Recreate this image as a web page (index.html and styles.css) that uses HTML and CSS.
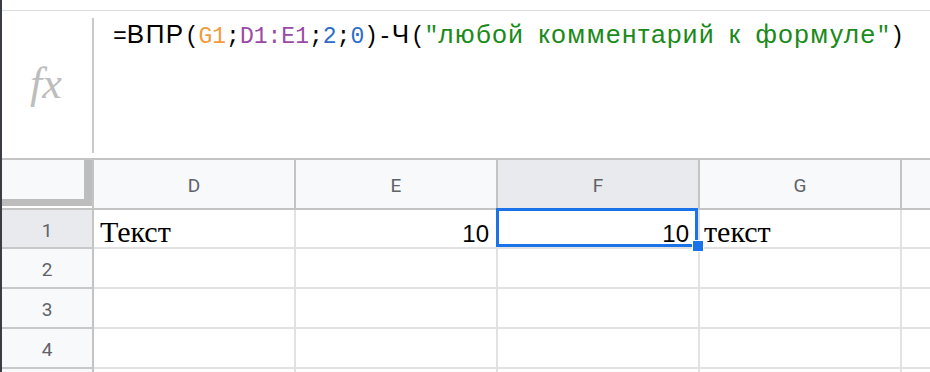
FILE: index.html
```html
<!DOCTYPE html>
<html lang="ru">
<head>
<meta charset="utf-8">
<title>Sheets</title>
<link rel="stylesheet" href="styles.css">
</head>
<body>
<div class="app">
  <div class="topbar"></div>
  <div class="fbar">
    <div class="fx">fx</div>
    <div class="fdiv"></div>
    <div class="ftext"><span class="m">=</span><span class="s">ВПР</span><span class="m">(<span class="c-or">G1</span>;<span class="c-pu">D1:E1</span>;<span class="c-bl">2</span>;<span class="c-bl">0</span>)-</span><span class="s">Ч</span><span class="m">(<span class="c-gr">"</span></span><span class="s c-gr">любой</span><span class="m"> </span><span class="s c-gr">комментарий</span><span class="m"> </span><span class="s c-gr">к</span><span class="m"> </span><span class="s c-gr">формуле</span><span class="m"><span class="c-gr">"</span>)</span></div>
  </div>
  <div class="grid">
    <div class="corner"><div class="corner-in"></div></div>
    <div class="ch">D</div>
    <div class="ch">E</div>
    <div class="ch sel">F</div>
    <div class="ch">G</div>
    <div class="ch last"></div>

    <div class="rh sel r1">1</div>
    <div class="cell r1 serif">Текст</div>
    <div class="cell r1 num">10</div>
    <div class="cell r1 num active">10<span class="handle"></span></div>
    <div class="cell r1 serif lt">текст</div>
    <div class="cell r1 last"></div>

    <div class="rh">2</div>
    <div class="cell"></div>
    <div class="cell"></div>
    <div class="cell"></div>
    <div class="cell"></div>
    <div class="cell last"></div>

    <div class="rh">3</div>
    <div class="cell"></div>
    <div class="cell"></div>
    <div class="cell"></div>
    <div class="cell"></div>
    <div class="cell last"></div>

    <div class="rh">4</div>
    <div class="cell"></div>
    <div class="cell"></div>
    <div class="cell"></div>
    <div class="cell"></div>
    <div class="cell last"></div>

    <div class="rh"></div>
    <div class="cell"></div>
    <div class="cell"></div>
    <div class="cell"></div>
    <div class="cell"></div>
    <div class="cell last"></div>
  </div>
</div>
</body>
</html>
```

FILE: styles.css
```css
* { box-sizing: border-box; }
html, body { margin: 0; padding: 0; background: #fff; }
body {
  width: 930px;
  height: 372px;
  overflow: hidden;
  font-family: Roboto, "Liberation Sans", sans-serif;
}
.app {
  border-left: 2px solid #3a3d41;
  height: 372px;
  overflow: hidden;
}
.topbar {
  height: 11px;
  border-bottom: 1px solid #dadce0;
}
.fbar {
  display: flex;
  height: 149px;
  border-bottom: 2px solid #c4c4c4;
}
.fx {
  width: 90px;
  display: flex;
  align-items: center;
  justify-content: center;
  font-family: "Liberation Serif", serif;
  font-style: italic;
  font-size: 44px;
  color: #bdbdbd;
  padding-bottom: 2px;
  padding-right: 2px;
}
.fdiv {
  width: 2px;
  background: #c9c9c9;
  margin: 7px 0 5px;
}
.ftext {
  padding: 8px 0 0 19px;
  font-family: "Liberation Mono", monospace;
  font-size: 23px;
  line-height: 30px;
  color: #000;
  white-space: pre;
}
.ftext .s {
  font-family: "Liberation Sans", Arial, sans-serif;
  font-size: 26px;
  letter-spacing: 1.5px;
}
.c-or { color: #f29b3a; }
.c-pu { color: #9a4aa6; }
.c-bl { color: #2b6dc8; }
.c-gr { color: #1b8a1b; }

.grid {
  display: grid;
  grid-template-columns: 92px 202px 202px 202px 202px 28px;
  grid-template-rows: 50px 39px 40px 40px 40px 40px;
}
.corner {
  background: #fff;
  border-right: 2px solid #c4c4c4;
  border-bottom: 2px solid #c4c4c4;
}
.corner-in {
  width: 90px;
  height: 46px;
  background: #f8f9fa;
  border-right: 8px solid #bdbdbd;
  border-bottom: 7px solid #bdbdbd;
}
.ch {
  background: #f8f9fa;
  border-right: 2px solid #c4c4c4;
  border-bottom: 2px solid #c4c4c4;
  display: flex;
  align-items: center;
  justify-content: center;
  font-size: 19px;
  color: #5f6368;
  padding-top: 2px;
}
.ch.sel { background: #e8eaed; }
.ch.last { border-right: 0; }
.rh {
  background: #f8f9fa;
  border-right: 2px solid #c4c4c4;
  border-bottom: 2px solid #c8c8c8;
  display: flex;
  align-items: center;
  justify-content: center;
  font-size: 19px;
  color: #5f6368;
  padding-top: 3px;
}
.rh.sel { background: #e8eaed; }
.cell {
  border-right: 2px solid #e2e2e2;
  border-bottom: 2px solid #e2e2e2;
  display: flex;
  align-items: flex-end;
  color: #000;
}
.cell.last { border-right: 0; }
.serif {
  font-family: "Liberation Serif", serif;
  font-size: 30px;
  line-height: 30px;
  padding-left: 6px;
}
.serif.lt { padding-left: 4px; }
.num {
  justify-content: flex-end;
  font-family: "Liberation Sans", Arial, sans-serif;
  font-size: 24px;
  line-height: 26px;
  padding-right: 7px;
}
.active {
  position: relative;
  padding-right: 9px;
}
.active::after {
  content: "";
  position: absolute;
  top: -2px;
  left: -2px;
  right: 0;
  bottom: 0;
  border: 3px solid #1a73e8;
  pointer-events: none;
}
.handle {
  position: absolute;
  left: 194px;
  top: 30px;
  width: 12px;
  height: 12px;
  background: #1a73e8;
  border: 1px solid #fff;
  z-index: 2;
}
```
